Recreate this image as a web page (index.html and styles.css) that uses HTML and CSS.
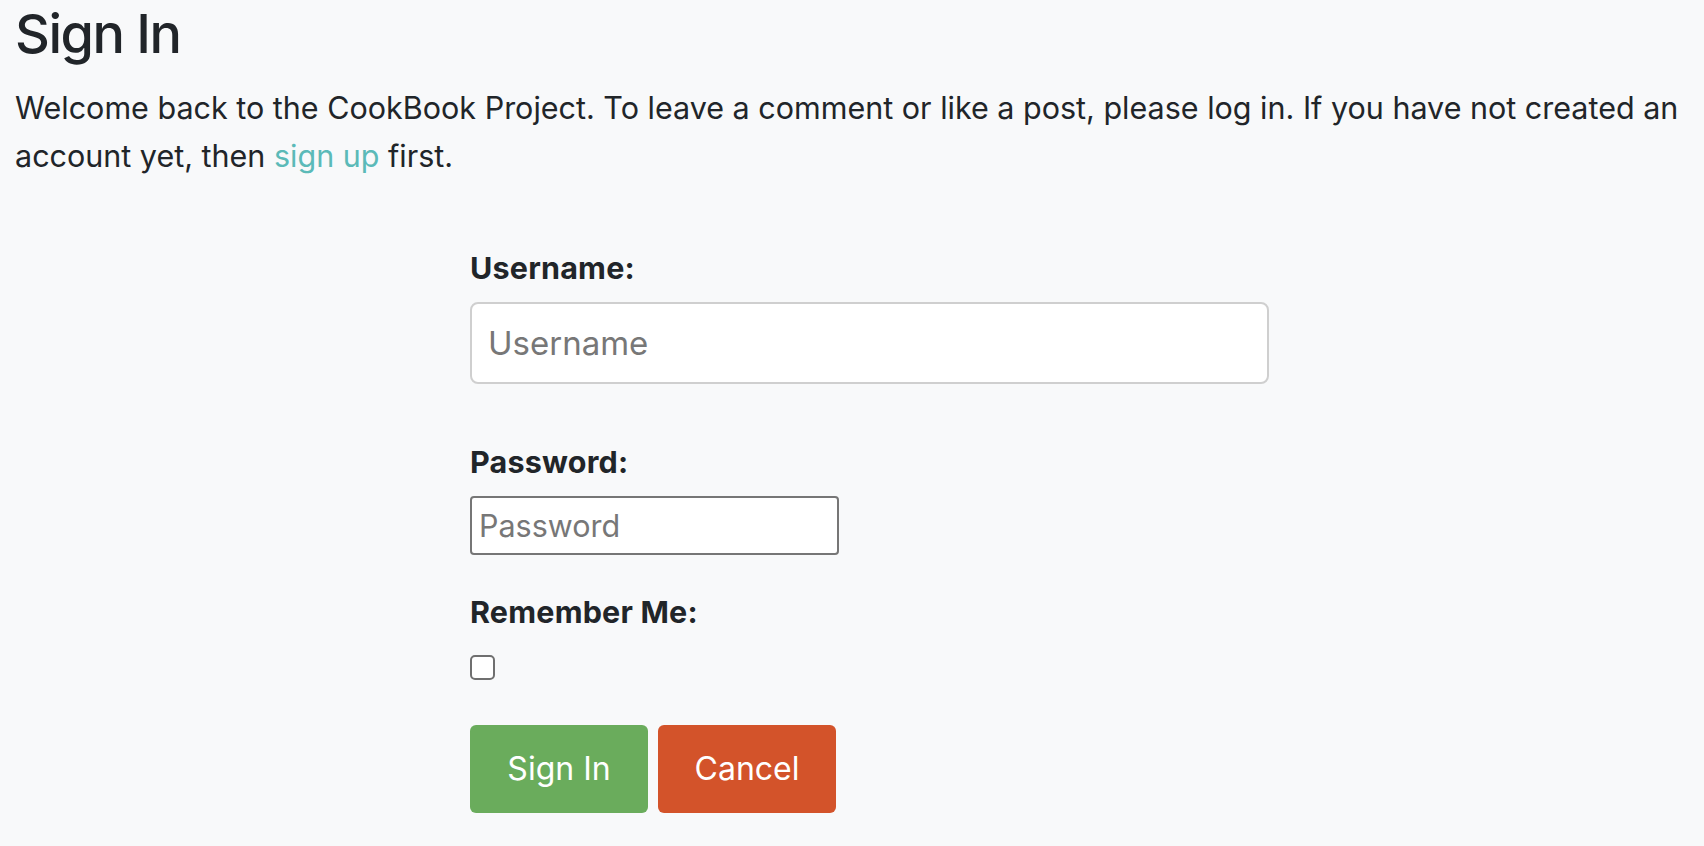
FILE: index.html
```html
<!DOCTYPE html>
<html lang="en">
<head>
<meta charset="utf-8">
<title>Sign In</title>
<link rel="stylesheet" href="styles.css">
</head>
<body>
<main class="page">
  <h1 class="title">Sign In</h1>
  <p class="intro">Welcome back to the CookBook Project. To leave a comment or like a post, please log in. If you have not created an account yet, then <a class="link" href="#">sign up</a> first.</p>
  <form class="login-form">
    <label class="field-label label-user" for="username">Username:</label>
    <input class="input-user" id="username" type="text" placeholder="Username">
    <label class="field-label label-pass" for="password">Password:</label>
    <input class="input-pass" id="password" type="password" placeholder="Password">
    <label class="field-label label-remember" for="remember">Remember Me:</label>
    <input class="check" id="remember" type="checkbox">
    <div class="actions">
      <button class="btn btn-primary" type="submit">Sign In</button>
      <button class="btn btn-cancel" type="button">Cancel</button>
    </div>
  </form>
</main>
</body>
</html>
```
FILE: styles.css
```css
* { box-sizing: border-box; }
html, body { margin: 0; padding: 0; }
body {
  background: #f8f9fa;
  color: #212529;
  font-family: Inter, "Liberation Sans", sans-serif;
  font-size: 30.5px;
  line-height: 48px;
}
.page {
  padding: 1px 15px 0 15px;
}
.title {
  margin: 0 0 17px 0;
  font-size: 54px;
  line-height: 66px;
  font-weight: 500;
  letter-spacing: -1.5px;
}
.intro {
  margin: 0;
}
.link {
  color: #5bbab8;
  text-decoration: none;
}
.login-form {
  display: flex;
  flex-direction: column;
  align-items: flex-start;
  margin-left: 455px;
  margin-top: 64px;
}
.field-label {
  font-weight: 700;
  display: block;
  letter-spacing: 0.2px;
}
.input-user {
  margin-top: 10px;
  width: 799px;
  height: 82px;
  border: 2px solid #cfcfcf;
  border-radius: 8px;
  background: #fff;
  padding: 0 16px;
  font-family: Inter, "Liberation Sans", sans-serif;
  font-size: 33px;
  color: #212529;
  outline: none;
}
.input-user::placeholder { color: #777; }
.label-pass { margin-top: 54px; }
.input-pass {
  margin-top: 10px;
  width: 369px;
  height: 58.5px;
  border: 2px solid #767676;
  border-radius: 4px;
  background: #fff;
  padding: 0 7px;
  font-family: Inter, "Liberation Sans", sans-serif;
  font-size: 30.5px;
  color: #212529;
  outline: none;
}
.input-pass::placeholder { color: #777; }
.label-remember { margin-top: 33px; }
.check {
  -webkit-appearance: none;
  appearance: none;
  margin: 19px 0 0 0;
  width: 25px;
  height: 25px;
  border: 2px solid #6f6f6f;
  border-radius: 5px;
  background: #fff;
}
.actions {
  display: flex;
  gap: 10px;
  margin-top: 45px;
}
.btn {
  width: 178px;
  height: 88px;
  border: none;
  border-radius: 6px;
  color: #fff;
  font-family: Inter, "Liberation Sans", sans-serif;
  font-size: 32px;
  font-weight: 400;
  padding: 0;
  cursor: pointer;
}
.btn-primary { background: #6aac5c; }
.btn-cancel { background: #d3532a; }
```
